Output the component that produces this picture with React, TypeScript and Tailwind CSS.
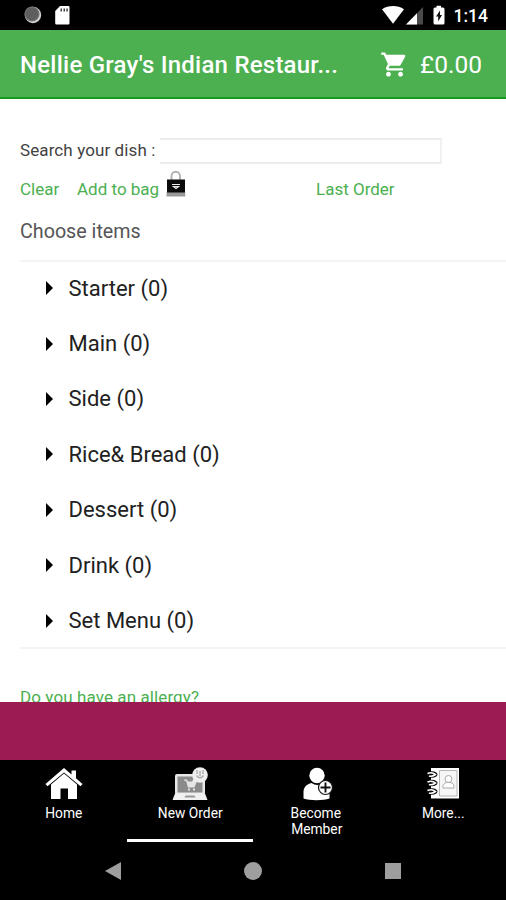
import React, { useState } from "react";

const categories = [
  { id: 1, name: "Starter", count: 0 },
  { id: 2, name: "Main", count: 0 },
  { id: 3, name: "Side", count: 0 },
  { id: 4, name: "Rice& Bread", count: 0 },
  { id: 5, name: "Dessert", count: 0 },
  { id: 6, name: "Drink", count: 0 },
  { id: 7, name: "Set Menu", count: 0 },
];

const StatusBar: React.FC = () => (
  <div className="flex h-[30px] shrink-0 items-start bg-black pl-6 pr-[18px] pt-[5px] text-white">
    <svg className="h-5 w-[18px]" viewBox="0 0 18 20">
      <circle cx="9" cy="10" r="8.2" fill="#d4d4d4" />
      <circle cx="8" cy="9" r="7.6" fill="#777" />
      <circle cx="8" cy="9" r="6.5" fill="#5f5f5f" />
    </svg>
    <svg className="ml-[13px] h-5 w-[15px]" viewBox="0 0 15 20">
      <path
        d="M5 1h8.3a1.2 1.2 0 0 1 1.2 1.2v16a1.3 1.3 0 0 1-1.3 1.3H1.5A1.3 1.3 0 0 1 .2 18.200V6z"
        fill="#fff"
      />
      <path d="M5.500 3.500h1.500v3H5.500zM8.500 3.500h1.500v3h-1.500zM11.300 3.500h1.500v3h-1.500z" fill="#444" />
    </svg>
    <svg className="ml-auto h-5 w-[22px]" viewBox="0 0 22 20">
      <path d="M0 4.200C6.500-.1 15.500-.1 22 4.200L11 18.800z" fill="#fff" />
    </svg>
    <svg className="ml-[2px] h-5 w-[17px]" viewBox="0 0 17 20">
      <path d="M17 2v17.500H0z" fill="#4a4a4a" />
      <path d="M11 8.200v11.300H0z" fill="#fff" />
    </svg>
    <svg className="ml-2.5 h-5 w-3" viewBox="0 0 12 20">
      <path
        d="M3.500 .8h4.500v1.700h2A1.500 1.500 0 0 1 11.500 4v14a1.500 1.500 0 0 1-1.500 1.500H2A1.500 1.500 0 0 1 .5 18V4A1.500 1.500 0 0 1 2 2.500h1.500z"
        fill="#fff"
      />
      <path d="M7 5.500L3 11.500h2.200v5L9 10H7z" fill="#111" />
    </svg>
    <span className="ml-[9px] text-[17.5px] font-medium leading-[22px]">1:14</span>
  </div>
);

const Header: React.FC<{ total: string }> = ({ total }) => (
  <header className="flex h-[69px] shrink-0 items-center border-b-2 border-[#159a1d] bg-[#4caf50] pl-5 pr-6 pt-[2px] text-white">
    <h1 className="whitespace-nowrap text-[24px] font-medium tracking-[0.23px]">
      Nellie Gray's Indian Restaur...
    </h1>
    <svg className="-mt-px ml-auto h-[29px] w-[29px]" viewBox="0 0 24 24" fill="currentColor">
      <path d="M7 18c-1.100 0-1.990.9-1.990 2S5.900 22 7 22s2-.9 2-2-.9-2-2-2zM1 2v2h2l3.600 7.590-1.350 2.450c-.16.280-.25.610-.25.960 0 1.100.9 2 2 2h12v-2H7.420c-.14 0-.25-.11-.25-.25l.03-.12.900-1.630h7.450c.75 0 1.410-.41 1.750-1.030l3.580-6.490A1 1 0 0 0 20 4H5.210l-.94-2H1zm16 16c-1.100 0-1.990.9-1.990 2s.89 2 1.990 2 2-.9 2-2-.9-2-2-2z" />
    </svg>
    <span className="ml-[11px] pt-[2px] text-[24.5px]">{total}</span>
  </header>
);

const BagIcon: React.FC = () => (
  <svg className="h-7 w-5" viewBox="0 0 20 28">
    <path d="M5.500 10V6a4.200 4.200 0 0 1 8.500 0v4" fill="none" stroke="#b0b0b0" strokeWidth="1.800" />
    <path d="M1 9.500h18V23H1z" fill="#0b0b0b" />
    <path d="M.5 22.500h18.800v4H.5z" fill="#999" />
    <path d="M6 14.500h8M7.500 16.500h5l-2.500 2z" fill="none" stroke="#eee" strokeWidth="1.200" />
  </svg>
);

const HomeIcon: React.FC = () => (
  <svg className="h-9 w-[38px]" viewBox="0 0 38 36" fill="#fff">
    <path d="M19 2L.5 18l2 2.200L19 6.500l16.500 13.700 2-2.200L31 12.300V4.500h-4.500v4z" />
    <path d="M19 7.600L6 18.500V33h9.500V22.500h7.500V33h9V18.500z" />
  </svg>
);

const OrderIcon: React.FC = () => (
  <svg className="h-9 w-[38px]" viewBox="0 0 38 36">
    <rect x="4" y="8" width="30" height="21" rx="2" fill="#e8e8e8" />
    <path d="M6.500 10.500h25v16h-25z" fill="#8b8b8b" />
    <path d="M13 14h2.500l1 2h8.500l-2 5h-5.500l-1.500-5" fill="#e5e5e5" stroke="#e5e5e5" strokeWidth="1.200" />
    <path d="M17 23.500h2M22 23.500h2" stroke="#e5e5e5" strokeWidth="1.800" />
    <path d="M4 27.500h30l2.500 6.500h-35z" fill="#f1f1f1" />
    <path d="M14.500 29.500h9l1 2h-11z" fill="#999" />
    <path d="M20.500 17l4-8 6 5z" fill="#eee" />
    <circle cx="29" cy="9" r="7.800" fill="#eee" />
    <path d="M26 4v4M29 5v5M32 4v4M25.500 9.500q3.500 4.500 7 0" fill="none" stroke="#aaa" strokeWidth="1.300" />
  </svg>
);

const MemberIcon: React.FC = () => (
  <svg className="h-9 w-[38px]" viewBox="0 0 38 36">
    <circle cx="19" cy="9.500" r="7.700" fill="#fff" />
    <path d="M5.500 32.500V26c0-5 3.500-8 8-9 3.500 2.500 8 2.500 11.500 0 4.500 1 6.500 4 6.500 9v6.500c-6 2.200-20 2.200-26 0z" fill="#fff" />
    <circle cx="27.500" cy="21.500" r="7" fill="#fff" stroke="#111" strokeWidth="1.200" />
    <path d="M27.500 16.500v10M22.500 21.500h10" stroke="#111" strokeWidth="1.900" />
  </svg>
);

const MoreIcon: React.FC = () => (
  <svg className="h-9 w-[38px]" viewBox="0 0 38 36">
    <path d="M7 2h28v30.500H7z" fill="#fff" />
    <path d="M15.500 4.500h17.500v25.500H15.500z" fill="#f6f6f6" stroke="#b5b5b5" />
    <circle cx="24.500" cy="13" r="3.500" fill="#fff" stroke="#aaa" />
    <path d="M19 22v-2.500q1-2.500 3.500-3h4q3 .5 3.500 3V22z" fill="#fff" stroke="#aaa" />
    {[8.5, 17, 25.5].map((y) => (
      <g key={y} transform={`translate(0 ${y})`}>
        <ellipse cx="8" cy="0" rx="5.500" ry="3.200" fill="#0b0b0b" />
        <path d="M3.500 -1q4.500-2 8 1q-3.500 2.500-6.500 1.500" fill="none" stroke="#fff" strokeWidth="1.600" />
      </g>
    ))}
  </svg>
);

const tabs = [
  { id: "home", lines: ["Home"], icon: <HomeIcon /> },
  { id: "order", lines: ["New Order"], icon: <OrderIcon /> },
  { id: "member", lines: ["Become", "Member"], icon: <MemberIcon /> },
  { id: "more", lines: ["More..."], icon: <MoreIcon /> },
];

const TabBar: React.FC = () => {
  const [active, setActive] = useState("order");

  return (
    <nav className="grid h-[82px] shrink-0 grid-cols-4 bg-black">
      {tabs.map((tab) => (
        <button
          key={tab.id}
          onClick={() => setActive(tab.id)}
          className={`flex flex-col items-center border-b-[3px] pl-px pt-1.5 text-[13.8px] leading-4 text-white ${
            active === tab.id ? "border-white" : "border-transparent"
          }`}
        >
          {tab.icon}
          <span className="mt-[3px] flex flex-col">
            {tab.lines.map((line, i) => (
              <span key={line} className={i === 0 && tab.lines.length > 1 ? "-ml-[2px]" : ""}>
                {line}
              </span>
            ))}
          </span>
        </button>
      ))}
    </nav>
  );
};

const SystemNav: React.FC = () => (
  <div className="flex h-[58px] shrink-0 items-center justify-between bg-black pl-[105px] pr-[105px]">
    <svg className="h-[18px] w-4" viewBox="0 0 16 18">
      <path d="M16 0v18L0 9z" fill="#9e9e9e" />
    </svg>
    <span className="size-[18px] rounded-full bg-[#9e9e9e]" />
    <span className="size-4 bg-[#9e9e9e]" />
  </div>
);

const App: React.FC = () => {
  const [search, setSearch] = useState("");

  return (
    <div className="flex h-[900px] w-[506px] flex-col overflow-hidden bg-white font-[Roboto,sans-serif]">
      <StatusBar />
      <Header total="£0.00" />

      <main className="flex h-[603px] shrink-0 flex-col overflow-hidden pl-5 text-[#424242]">
        <div className="mt-[39px] flex h-[26px] items-center">
          <label
            htmlFor="search"
            className="-mt-[3px] w-[140px] whitespace-nowrap text-[17px] leading-6 tracking-[0.1px]"
          >
            Search your dish :
          </label>
          <input
            id="search"
            value={search}
            onChange={(e) => setSearch(e.target.value)}
            className="h-[26px] w-[282px] border-y-2 border-r-2 border-[#ececec] border-r-[#f1f1f1] px-1 outline-none"
          />
        </div>

        <div className="mt-1.5 flex h-10 shrink-0 items-center text-[17px] text-[#4caf50]">
          <button className="w-[57px] text-left">Clear</button>
          <button className="flex w-[239px] items-center">
            <span className="w-[90px] whitespace-nowrap text-left">Add to bag</span>
            <span className="-mt-[13px] -ml-px">
              <BagIcon />
            </span>
          </button>
          <button>Last Order</button>
        </div>

        <h2 className="mt-[7px] h-11 shrink-0 text-[19.7px] leading-[30px] text-[#555]">
          Choose items
        </h2>

        <ul className="-mt-px h-[389px] shrink-0 border-y-2 border-[#f4f4f4] text-[22px] text-[#212121]">
          {categories.map((item) => (
            <li key={item.id} className="flex h-[55.4px] items-center pb-[3px] pl-[26px]">
              <svg className="mr-[15.5px] h-3.5 w-[7px]" viewBox="0 0 7 14">
                <path d="M0 0l7 7-7 7z" fill="#000" />
              </svg>
              {item.name} ({item.count})
            </li>
          ))}
        </ul>

        <a className="mt-[36px] shrink-0 text-[17px] leading-6 tracking-[0.1px] text-[#4caf50]">
          Do you have an allergy?
        </a>
      </main>

      <div className="h-[58px] shrink-0 bg-[#9c1b53]" />
      <TabBar />
      <SystemNav />
    </div>
  );
};

export default App;
